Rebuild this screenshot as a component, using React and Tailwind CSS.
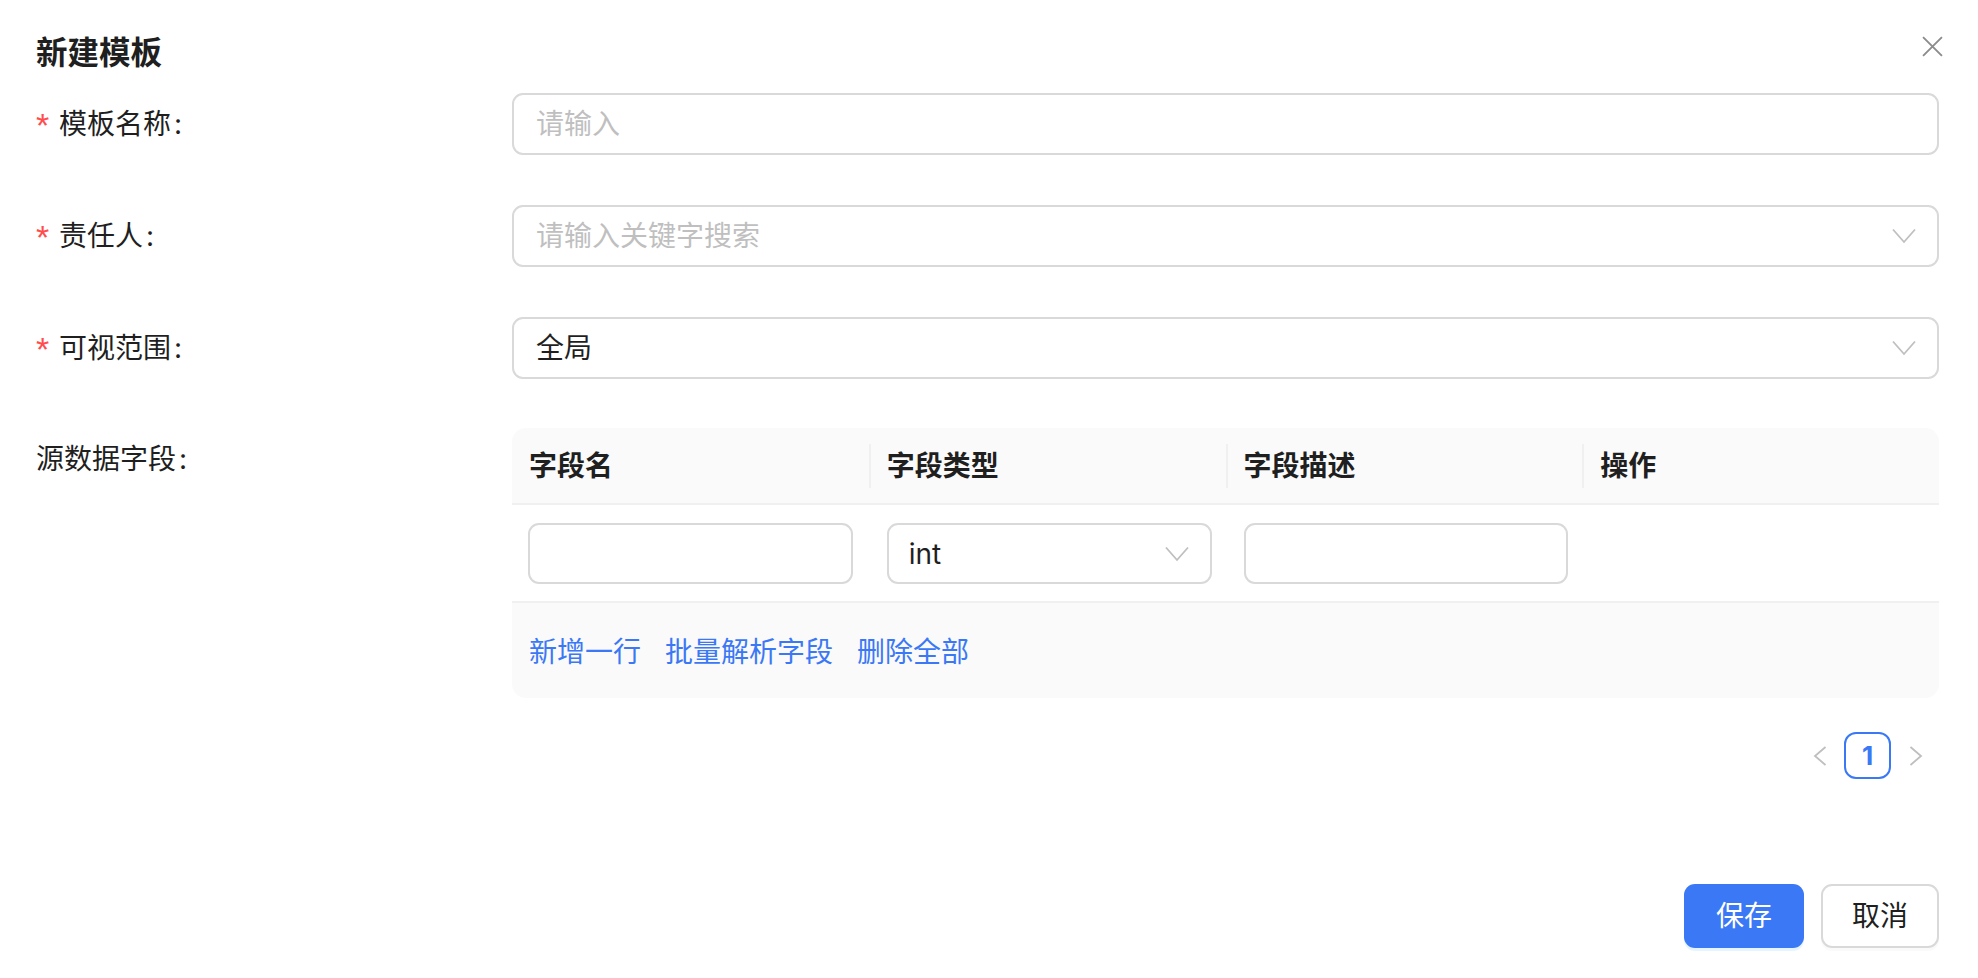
import React from 'react';

const Chevron = () => (
  <svg width="24" height="16" viewBox="0 0 24 16" fill="none" className="shrink-0">
    <path d="M1 1.5L12 14L23 1.5" stroke="#bfbfbf" strokeWidth="1.8" />
  </svg>
);

const TextInput = ({ placeholder }) => (
  <div className="h-[62px] w-full rounded-[11px] border-2 border-[#d9d9d9] bg-white flex items-center pl-[22px] pr-[21px] text-[28px] leading-none text-[#bfbfbf]">
    {placeholder}
  </div>
);

const SelectInput = ({ value, placeholder }) => (
  <div className="h-[62px] w-full rounded-[11px] border-2 border-[#d9d9d9] bg-white flex items-center justify-between pl-[22px] pr-[21px] text-[28px] leading-none">
    {value ? <span className="text-[#1f1f1f]">{value}</span> : <span className="text-[#bfbfbf]">{placeholder}</span>}
    <Chevron />
  </div>
);

const FormRow = ({ label, required, children, className = 'mb-[50px]' }) => (
  <div className={`flex ${className}`}>
    <div className="w-[476px] h-[62px] shrink-0 flex items-center text-[28px] leading-none">
      {required ? (
        <span className="w-[23px] text-[34px] leading-none text-[#ff4d4f] font-['Liberation_Sans',sans-serif] mt-[2px]">*</span>
      ) : null}
      <span>{label}</span>
      <span className="ml-[3px]">:</span>
    </div>
    <div className="flex-1 min-w-0">{children}</div>
  </div>
);

const columns = ['字段名', '字段类型', '字段描述', '操作'];

export default function App() {
  return (
    <div className="w-full h-[978px] bg-white pl-[36px] pr-[39px] text-[#1f1f1f] font-['Inter','Noto_Sans_CJK_SC',sans-serif]">
      {/* 标题 */}
      <div className="flex justify-between items-start h-[93px]">
        <h1 className="mt-[31px] text-[31.5px] leading-[44px] font-semibold">新建模板</h1>
        <button className="mt-[34px] mr-[-5px] w-[24px] h-[24px] flex items-center justify-center text-[#8c8c8c]">
          <svg width="21" height="21" viewBox="0 0 20 20" fill="none">
            <path d="M1 1L19 19M19 1L1 19" stroke="currentColor" strokeWidth="1.8" />
          </svg>
        </button>
      </div>

      <FormRow label="模板名称" required>
        <TextInput placeholder="请输入" />
      </FormRow>
      <FormRow label="责任人" required>
        <SelectInput placeholder="请输入关键字搜索" />
      </FormRow>
      <FormRow label="可视范围" required className="mb-[49px]">
        <SelectInput value="全局" />
      </FormRow>

      {/* 源数据字段 */}
      <FormRow label="源数据字段" className="">
        <div className="rounded-[14px] overflow-hidden">
          <div className="grid grid-cols-4 h-[77px] bg-[#fafafa] border-b-2 border-[#f0f0f0]">
            {columns.map((c, i) => (
              <div key={c} className="flex items-center">
                {i > 0 ? <div className="w-[2px] h-[44px] bg-[#f0f0f0]" /> : null}
                <span className={`${i > 0 ? 'pl-[16px]' : 'pl-[17px]'} text-[28px] leading-none font-semibold`}>{c}</span>
              </div>
            ))}
          </div>
          <div className="grid grid-cols-4 pt-[18px] pb-[17px] border-b-2 border-[#f0f0f0] bg-white">
            <div className="px-[16px]">
              <div className="h-[61px] rounded-[11px] border-2 border-[#d9d9d9]" />
            </div>
            <div className="pl-[18px] pr-[14px]">
              <div className="h-[61px] rounded-[11px] border-2 border-[#d9d9d9] flex items-center justify-between pl-[20px] pr-[21px] text-[28px] leading-none">
                <span>int</span>
                <Chevron />
              </div>
            </div>
            <div className="pl-[18px] pr-[14px]">
              <div className="h-[61px] rounded-[11px] border-2 border-[#d9d9d9]" />
            </div>
            <div />
          </div>
          <div className="h-[95px] bg-[#fafafa] flex items-center pl-[17px] pt-[2px] text-[28px] leading-none text-[#3a78f5]">
            <span className="mr-[24px]">新增一行</span>
            <span className="mr-[24px]">批量解析字段</span>
            <span>删除全部</span>
          </div>
        </div>

        {/* 分页 */}
        <div className="flex justify-end gap-[1px] mt-[34px]">
          <div className="w-[47px] h-[47px] flex items-center justify-center">
            <svg width="14" height="20" viewBox="0 0 14 20" fill="none">
              <path d="M12.5 1L2 10L12.5 19" stroke="#bfbfbf" strokeWidth="1.8" />
            </svg>
          </div>
          <div className="w-[47px] h-[47px] rounded-[12px] border-2 border-[#3a78f5] flex items-center justify-center text-[#3a78f5] text-[26px] leading-none font-bold">
            1
          </div>
          <div className="w-[47px] h-[47px] flex items-center justify-center">
            <svg width="14" height="20" viewBox="0 0 14 20" fill="none">
              <path d="M1.5 1L12 10L1.5 19" stroke="#bfbfbf" strokeWidth="1.8" />
            </svg>
          </div>
        </div>
      </FormRow>

      {/* 底部按钮 */}
      <div className="flex justify-end gap-[17px] mt-[105px]">
        <button className="w-[120px] h-[64px] rounded-[11px] bg-[#3a78f5] text-white text-[28px] leading-none shadow-[0_3px_0_rgba(5,145,255,0.1)]">
          保存
        </button>
        <button className="w-[118px] h-[64px] rounded-[11px] border-2 border-[#d9d9d9] bg-white text-[#1f1f1f] text-[28px] leading-none shadow-[0_3px_0_rgba(0,0,0,0.02)]">
          取消
        </button>
      </div>
    </div>
  );
}
